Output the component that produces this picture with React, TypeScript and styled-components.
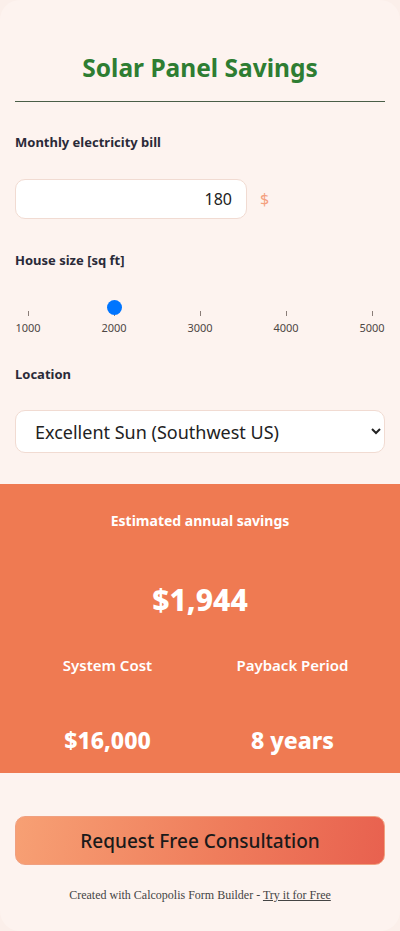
import React, { useState } from "react";
import styled, { createGlobalStyle } from "styled-components";

const GlobalStyle = createGlobalStyle`
  html, body {
    margin: 0;
    padding: 0;
    background: #fbefea;
  }
  * {
    box-sizing: border-box;
  }
`;

const Card = styled.div`
  width: 400px;
  min-height: 931px;
  background: #fdf3ef;
  border-radius: 20px;
  font-family: "Noto Sans", "Open Sans", sans-serif;
  color: #2a2a38;
  overflow: hidden;
`;

const Section = styled.div`
  padding: 0 15px;
`;

const Title = styled.h1`
  margin: 52px 0 0;
  font-size: 24.5px;
  line-height: 31px;
  font-weight: 700;
  text-align: center;
  color: #2e7d32;
`;

const Divider = styled.hr`
  margin: 18px 0 0;
  border: 0;
  border-top: 1px solid #4a5e48;
`;

const Label = styled.div<{ $gap: number }>`
  margin-top: ${(p) => p.$gap}px;
  font-size: 13px;
  line-height: 16px;
  font-weight: 700;
  color: #2a2a38;
`;

const InputRow = styled.div`
  display: flex;
  align-items: center;
  gap: 13px;
  margin-top: 29px;
`;

const NumberInput = styled.input`
  width: 232px;
  height: 40px;
  padding: 0 14px;
  border: 1px solid #f1dbd2;
  border-radius: 10px;
  background: #fff;
  font-family: "Noto Sans", sans-serif;
  font-size: 16px;
  color: #222;
  text-align: right;
  outline: none;
`;

const Unit = styled.span`
  font-size: 16px;
  color: #f4a07e;
`;

const SliderBox = styled.div`
  position: relative;
  margin-top: 28px;
  padding-top: 15px;
`;

const Ticks = styled.div`
  display: flex;
  justify-content: space-between;
`;

const Tick = styled.div`
  display: flex;
  flex-direction: column;
  align-items: center;
  width: 26px;

  &::before {
    content: "";
    width: 1px;
    height: 5px;
    background: #8a7d78;
  }
`;

const TickLabel = styled.span`
  margin-top: 5px;
  font-size: 11px;
  line-height: 14px;
  color: #4e4744;
`;

const Thumb = styled.div`
  position: absolute;
  top: 4px;
  width: 15px;
  height: 15px;
  margin-left: -7.5px;
  border-radius: 50%;
  background: #0075ff;
`;

const Select = styled.select`
  display: block;
  width: 100%;
  height: 43px;
  margin-top: 28px;
  padding: 0 10px 0 15px;
  border: 1px solid #f1dbd2;
  border-radius: 10px;
  background: #fff;
  font-family: "Noto Sans", sans-serif;
  font-size: 18px;
  color: #222;
  outline: none;
`;

const Results = styled.div`
  margin-top: 31px;
  padding: 28px 15px 19px;
  background: #ef7a52;
  color: #fff;
  text-align: center;
`;

const ResultTitle = styled.div`
  font-size: 14px;
  line-height: 18px;
  font-weight: 700;
`;

const BigValue = styled.div`
  margin-top: 52px;
  font-size: 30px;
  line-height: 36px;
  font-weight: 800;
`;

const Stats = styled.div`
  display: grid;
  grid-template-columns: 1fr 1fr;
  margin-top: 37px;
`;

const Stat = styled.div`
  display: flex;
  flex-direction: column;
  align-items: center;
`;

const StatLabel = styled.div`
  font-size: 15px;
  line-height: 20px;
  font-weight: 600;
`;

const StatValue = styled.div`
  margin-top: 51px;
  font-size: 23px;
  line-height: 28px;
  font-weight: 800;
`;

const Button = styled.button`
  display: block;
  width: 100%;
  height: 49px;
  margin-top: 43px;
  border: 1px solid #f0a080;
  border-radius: 10px;
  background: linear-gradient(100deg, #f7a074 0%, #ef7d5c 55%, #e8614f 100%);
  font-family: "Noto Sans", sans-serif;
  font-size: 19px;
  font-weight: 500;
  color: #1a1a1a;
  cursor: pointer;
`;

const Footer = styled.div`
  margin-top: 23px;
  font-family: "Liberation Serif", serif;
  font-size: 12px;
  line-height: 15px;
  color: #444;
  text-align: center;

  a {
    color: #444;
    text-decoration: underline;
  }
`;

const marks = [1000, 2000, 3000, 4000, 5000];

const App = () => {
  const [bill, setBill] = useState("180");
  const size = 2000;
  const pct = (size - 1000) / 4000;

  return (
    <>
      <GlobalStyle />
      <Card>
        <Section>
          <Title>Solar Panel Savings</Title>
          <Divider />
          <Label $gap={32}>Monthly electricity bill</Label>
          <InputRow>
            <NumberInput value={bill} onChange={(e) => setBill(e.target.value)} />
            <Unit>$</Unit>
          </InputRow>
          <Label $gap={33}>House size [sq ft]</Label>
          <SliderBox>
            <Thumb style={{ left: `calc(13px + ${pct} * (100% - 26px))` }} />
            <Ticks>
              {marks.map((m) => (
                <Tick key={m}>
                  <TickLabel>{m}</TickLabel>
                </Tick>
              ))}
            </Ticks>
          </SliderBox>
          <Label $gap={31}>Location</Label>
          <Select defaultValue="excellent">
            <option value="excellent">Excellent Sun (Southwest US)</option>
            <option value="good">Good Sun</option>
            <option value="average">Average Sun</option>
          </Select>
        </Section>
        <Results>
          <ResultTitle>Estimated annual savings</ResultTitle>
          <BigValue>$1,944</BigValue>
          <Stats>
            <Stat>
              <StatLabel>System Cost</StatLabel>
              <StatValue>$16,000</StatValue>
            </Stat>
            <Stat>
              <StatLabel>Payback Period</StatLabel>
              <StatValue>8 years</StatValue>
            </Stat>
          </Stats>
        </Results>
        <Section>
          <Button>Request Free Consultation</Button>
          <Footer>
            Created with Calcopolis Form Builder - <a href="#">Try it for Free</a>
          </Footer>
        </Section>
      </Card>
    </>
  );
};

export default App;
